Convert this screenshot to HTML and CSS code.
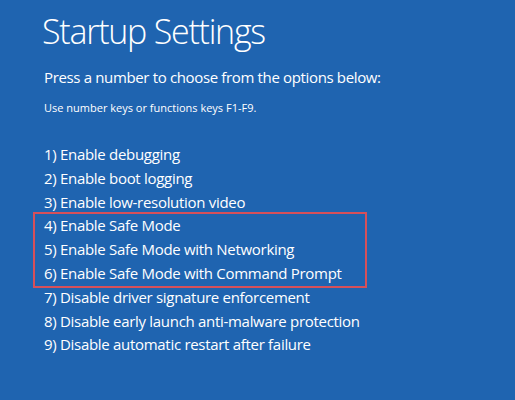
FILE: index.html
```html
<!DOCTYPE html>
<html>
<head>
<meta charset="utf-8">
<link rel="stylesheet" href="styles.css">
</head>
<body>
<main class="screen">
  <h1 class="title">Startup Settings</h1>
  <p class="lead">Press a number to choose from the options below:</p>
  <p class="hint">Use number keys or functions keys F1-F9.</p>
  <ul class="options">
    <li>1) Enable debugging</li>
    <li>2) Enable boot logging</li>
    <li>3) Enable low-resolution video</li>
    <li class="group">
      <ul class="highlight">
        <li>4) Enable Safe Mode</li>
        <li>5) Enable Safe Mode with Networking</li>
        <li>6) Enable Safe Mode with Command Prompt</li>
      </ul>
    </li>
    <li>7) Disable driver signature enforcement</li>
    <li>8) Disable early launch anti-malware protection</li>
    <li>9) Disable automatic restart after failure</li>
  </ul>
</main>
</body>
</html>
```
FILE: styles.css
```css
html, body {
  margin: 0;
  padding: 0;
  height: 100%;
}
body {
  background: #1f64b0;
  color: #ffffff;
  font-family: "Open Sans", "Noto Sans", sans-serif;
}
.screen {
  padding: 9px 0 0 44px;
}
.title {
  margin: 0 0 0 -2px;
  font-size: 34px;
  font-weight: 300;
  line-height: 44px;
  letter-spacing: -1.25px;
}
.lead {
  margin: 13px 0 0 0;
  font-size: 15px;
  line-height: 22px;
  letter-spacing: -0.35px;
}
.hint {
  margin: 12px 0 0 0;
  font-size: 11px;
  line-height: 16px;
  letter-spacing: 0;
}
.options {
  list-style: none;
  margin: 27px 0 0 0;
  padding: 0;
  font-size: 15px;
  line-height: 23.8px;
  letter-spacing: -0.3px;
}
.group {
  margin-left: -11px;
}
.highlight {
  list-style: none;
  margin: -2px 0;
  padding: 0 0 0 9px;
  width: 321px;
  border: 2px solid #d6505a;
}
```
